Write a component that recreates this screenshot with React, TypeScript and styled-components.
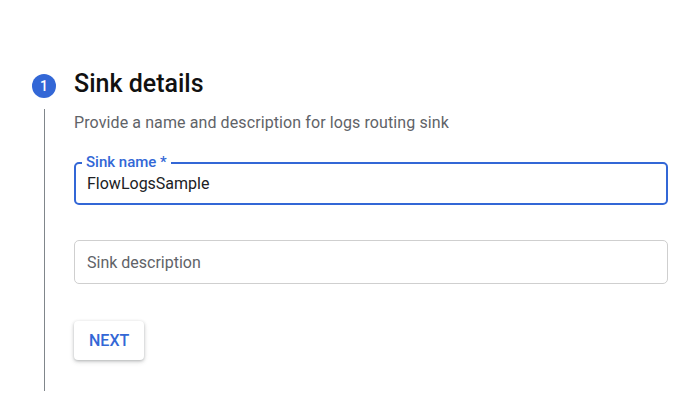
import React from 'react';
import styled, { createGlobalStyle } from 'styled-components';

const colors = {
  text: '#202124',
  title: '#111',
  muted: '#5f6368',
  blue: '#3367d6',
  rail: '#80868b',
  outline: '#cfcfcf',
};

const GlobalStyle = createGlobalStyle`
  html, body {
    margin: 0;
    background: #fff;
    font-family: Roboto, "Noto Sans", Arial, sans-serif;
  }
`;

const Page = styled.div`
  width: 691px;
  height: 394px;
  overflow: hidden;
  padding: 72px 23px 0 32px;
  box-sizing: border-box;
`;

const Step = styled.section`
  display: grid;
  grid-template-columns: 24px 1fr;
  column-gap: 18px;
`;

const Rail = styled.div`
  display: flex;
  flex-direction: column;
  align-items: center;
  gap: 11px;
  padding-top: 2px;
`;

const StepBadge = styled.div`
  width: 24px;
  height: 24px;
  border-radius: 50%;
  background: ${colors.blue};
  color: #fff;
  font-size: 14px;
  font-weight: 500;
  display: flex;
  align-items: center;
  justify-content: center;
`;

const RailLine = styled.div`
  width: 1px;
  height: 282px;
  background: ${colors.rail};
`;

const Body = styled.div`
  display: flex;
  flex-direction: column;
`;

const Title = styled.h2`
  margin: 0;
  font-size: 25px;
  font-weight: 500;
  line-height: 24px;
  color: ${colors.title};
`;

const Hint = styled.p`
  margin: 17px 0 0;
  font-size: 16px;
  line-height: 20px;
  letter-spacing: 0.1px;
  color: ${colors.muted};
`;

const Field = styled.label<{ $focused?: boolean }>`
  position: relative;
  display: flex;
  align-items: center;
  height: ${(p) => (p.$focused ? '43px' : '44px')};
  box-sizing: border-box;
  padding: 0 ${(p) => (p.$focused ? '11px' : '12px')};
  border: ${(p) => (p.$focused ? `2px solid ${colors.blue}` : `1px solid ${colors.outline}`)};
  border-radius: 5px;
`;

const FloatingLabel = styled.span`
  position: absolute;
  top: -10px;
  left: 6px;
  padding: 0 4px;
  background: #fff;
  font-size: 15px;
  font-weight: 500;
  line-height: 16px;
  color: ${colors.blue};
`;

const Value = styled.span<{ $placeholder?: boolean }>`
  font-size: 16px;
  color: ${(p) => (p.$placeholder ? colors.muted : colors.text)};
`;

const Fields = styled.div`
  display: flex;
  flex-direction: column;
  gap: 35px;
  margin-top: 29px;
`;

const Actions = styled.div`
  margin-top: 37px;
`;

const Button = styled.button`
  height: 39px;
  padding: 0 15px;
  border: none;
  border-radius: 4px;
  background: #fff;
  color: ${colors.blue};
  font-family: inherit;
  font-size: 16px;
  font-weight: 500;
  box-shadow: 0 1px 3px rgba(60, 64, 67, 0.3), 0 2px 5px rgba(60, 64, 67, 0.15);
  cursor: pointer;
`;

export default function App() {
  return (
    <>
      <GlobalStyle />
      <Page>
        <Step>
          <Rail>
            <StepBadge>1</StepBadge>
            <RailLine />
          </Rail>
          <Body>
            <Title>Sink details</Title>
            <Hint>Provide a name and description for logs routing sink</Hint>
            <Fields>
              <Field $focused>
                <FloatingLabel>Sink name *</FloatingLabel>
                <Value>FlowLogsSample</Value>
              </Field>
              <Field>
                <Value $placeholder>Sink description</Value>
              </Field>
            </Fields>
            <Actions>
              <Button>NEXT</Button>
            </Actions>
          </Body>
        </Step>
      </Page>
    </>
  );
}
